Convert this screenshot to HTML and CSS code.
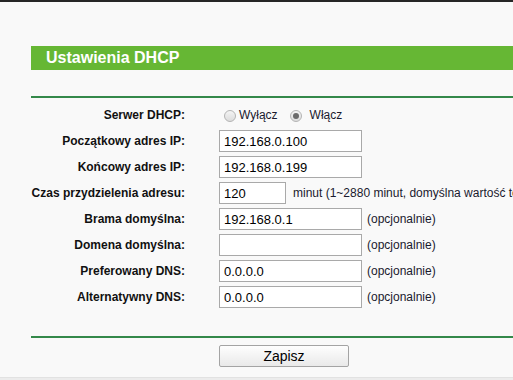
FILE: index.html
```html
<!DOCTYPE html>
<html lang="pl">
<head>
    <meta charset="UTF-8">
    <meta name="viewport" content="width=device-width, initial-scale=1.0">
    <title>Ustawienia DHCP</title>
    <link rel="stylesheet" href="styles.css">
</head>
<body>
    <div class="page">
        <h1 class="title">Ustawienia DHCP</h1>
        <div class="rule"></div>

        <form class="settings" onsubmit="return false;">
            <div class="row">
                <label class="label">Serwer DHCP:</label>
                <input type="radio" class="radio radio-off" name="dhcp" id="dhcpOff">
                <label for="dhcpOff" class="radio-text">Wyłącz</label>
                <input type="radio" class="radio radio-on" name="dhcp" id="dhcpOn" checked>
                <label for="dhcpOn" class="radio-text radio-text-on">Włącz</label>
            </div>
            <div class="row">
                <label class="label">Początkowy adres IP:</label>
                <input type="text" class="field" value="192.168.0.100">
            </div>
            <div class="row">
                <label class="label">Końcowy adres IP:</label>
                <input type="text" class="field" value="192.168.0.199">
            </div>
            <div class="row">
                <label class="label">Czas przydzielenia adresu:</label>
                <input type="text" class="field field-short" value="120">
                <span class="hint">minut (1~2880 minut, domyślna wartość to 120)</span>
            </div>
            <div class="row">
                <label class="label">Brama domyślna:</label>
                <input type="text" class="field" value="192.168.0.1">
                <span class="hint">(opcjonalnie)</span>
            </div>
            <div class="row">
                <label class="label">Domena domyślna:</label>
                <input type="text" class="field" value="">
                <span class="hint">(opcjonalnie)</span>
            </div>
            <div class="row">
                <label class="label">Preferowany DNS:</label>
                <input type="text" class="field" value="0.0.0.0">
                <span class="hint">(opcjonalnie)</span>
            </div>
            <div class="row">
                <label class="label">Alternatywny DNS:</label>
                <input type="text" class="field" value="0.0.0.0">
                <span class="hint">(opcjonalnie)</span>
            </div>

            <div class="rule rule-bottom"></div>
            <button type="submit" class="save">Zapisz</button>
        </form>
    </div>
    <div class="statusbar"></div>
</body>
</html>
```

FILE: styles.css
```css
/* General Styling */
body {
    margin: 0;
    padding: 0;
    font-family: "Liberation Sans", Arial, sans-serif;
    background-color: #f9f9f9;
    color: #000;
    overflow: hidden;
}

.page {
    height: 375px;
    border-top: 2px solid #262626;
    padding-left: 31px;
    overflow: hidden;
}

.title {
    margin: 44px 0 0 0;
    height: 24px;
    line-height: 23px;
    padding-left: 15px;
    background-color: #66b734; /* Green header bar */
    color: white;
    font-size: 16px;
    font-weight: bold;
}

.rule {
    margin-top: 26px;
    height: 2px;
    background-color: #34894a; /* Dark green separator */
}

.settings {
    margin: 0;
    padding-top: 4px;
}

.row {
    display: flex;
    align-items: center;
    height: 26px;
    white-space: nowrap;
}

.label {
    flex: none;
    width: 154px;
    margin-right: 34px;
    text-align: right;
    font-size: 12px;
    font-weight: bold;
    color: #111;
}

.field {
    flex: none;
    box-sizing: border-box;
    width: 143px;
    height: 22px;
    margin: 0;
    padding: 0 4px;
    border: 1px solid #a9a9a9;
    background-color: white;
    font-family: "Liberation Sans", Arial, sans-serif;
    font-size: 13px;
    color: #000;
    outline: none;
}

.field-short {
    width: 67px;
}

.hint {
    margin-left: 5px;
    font-size: 12px;
    color: #1a1a2e;
}

.field-short + .hint {
    margin-left: 7px;
}

/* Radio buttons */
.radio {
    -webkit-appearance: none;
    appearance: none;
    flex: none;
    box-sizing: border-box;
    width: 12px;
    height: 12px;
    margin: 1px 0 0 5px;
    border: 1px solid #b4b4b4;
    border-radius: 50%;
    background: linear-gradient(#f4f4f4, #dcdcdc);
    position: relative;
}

.radio:checked::after {
    content: "";
    position: absolute;
    left: 2px;
    top: 2px;
    width: 6px;
    height: 6px;
    border-radius: 50%;
    background-color: #6a6a6a;
}

.radio-on {
    margin-left: 12px;
}

.radio-text {
    margin-left: 3px;
    font-size: 12px;
    color: #1a1a2e;
}

.radio-text-on {
    margin-left: 8px;
}

.rule-bottom {
    margin-top: 26px;
}

.save {
    display: block;
    box-sizing: border-box;
    width: 130px;
    height: 22px;
    margin: 7px 0 0 188px;
    padding: 0;
    border: 1px solid #a4a4a4;
    border-radius: 2px;
    background: linear-gradient(#fefefe, #e9e9e9);
    font-family: "Liberation Sans", Arial, sans-serif;
    font-size: 14px;
    color: #000;
    cursor: pointer;
}

.statusbar {
    height: 3px;
    background-color: #ececec;
    border-top: 1px solid #e2e2e2;
}
```
